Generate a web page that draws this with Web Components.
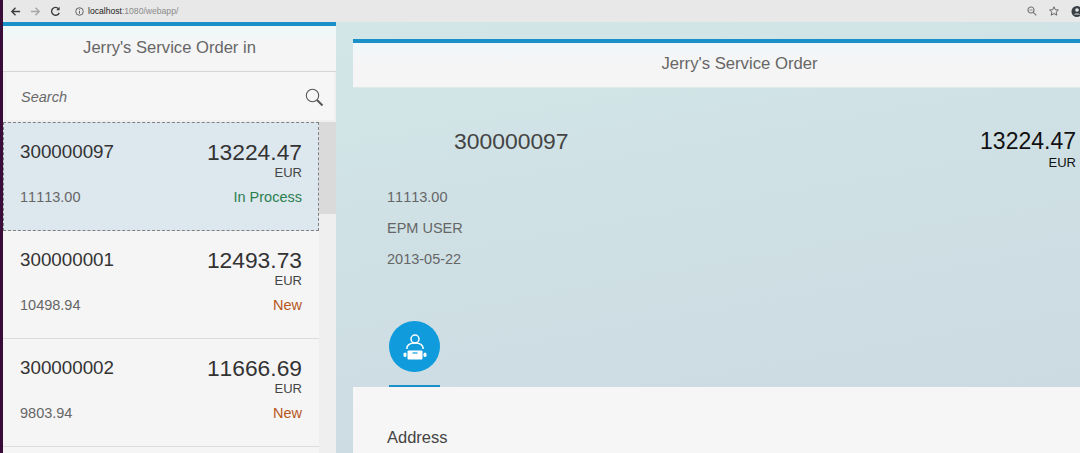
<!DOCTYPE html>
<html>
<head>
<meta charset="utf-8">
<title>Jerry's Service Order</title>
<style>
  html, body { margin: 0; height: 453px; overflow: hidden; background: #d2e2e6; font-family: "Liberation Sans", Arial, sans-serif; font-kerning: none; }
</style>
</head>
<body>
<order-app>
  <browser-bar slot="bar"></browser-bar>
  <master-panel slot="master" title-text="Jerry's Service Order in">
    <order-item selected number="300000097" amount="13224.47" net="11113.00" status="In Process" tone="good"></order-item>
    <order-item number="300000001" amount="12493.73" net="10498.94" status="New" tone="warn"></order-item>
    <order-item number="300000002" amount="11666.69" net="9803.94" status="New" tone="warn"></order-item>
    <order-item></order-item>
  </master-panel>
  <detail-panel slot="detail" title-text="Jerry's Service Order" number="300000097" amount="13224.47">
    <span slot="attr">11113.00</span>
    <span slot="attr">EPM USER</span>
    <span slot="attr">2013-05-22</span>
  </detail-panel>
</order-app>

<script>
  class OrderApp extends HTMLElement {
    constructor() {
      super();
      this.attachShadow({ mode: "open" }).innerHTML = `
        <style>
          :host { display: grid; grid-template-columns: 3px 333px 1fr; grid-template-rows: 22px 431px; width: 1080px; height: 453px; overflow: hidden; }
          .strip { grid-row: 1 / -1; grid-column: 1; background: #3a0c3a; }
          .bar { grid-row: 1; grid-column: 2 / -1; }
        </style>
        <div class="strip"></div>
        <div class="bar"><slot name="bar"></slot></div>
        <slot name="master"></slot>
        <slot name="detail"></slot>`;
    }
  }

  class BrowserBar extends HTMLElement {
    constructor() {
      super();
      this.attachShadow({ mode: "open" }).innerHTML = `
        <style>
          :host { display: flex; align-items: center; height: 22px; background: #e8e8e8; color: #555; font-size: 8.600px; box-sizing: border-box; padding: 0 0 0 7px; }
          svg { display: block; flex: none; }
          .nav { display: flex; gap: 9px; align-items: center; }
          .url { display: flex; align-items: center; gap: 4px; margin-left: 14px; }
          .url b { font-weight: normal; color: #222; }
          .url i { font-style: normal; color: #8a8a8a; }
          .right { margin-left: auto; display: flex; align-items: center; gap: 12px; margin-right: -1px; }
        </style>
        <div class="nav">
          <svg width="11" height="11" viewBox="0 0 12 12" fill="none" stroke="#3c3c3c" stroke-width="1.500"><path d="M11 6H2M6 2 2 6l4 4"/></svg>
          <svg width="11" height="11" viewBox="0 0 12 12" fill="none" stroke="#a5a5a5" stroke-width="1.500"><path d="M1 6h9M6 2l4 4-4 4"/></svg>
          <svg width="11" height="11" viewBox="0 0 12 12" fill="none" stroke="#3c3c3c" stroke-width="1.500"><path d="M10 7.500A4.300 4.300 0 1 1 9.300 3"/><path d="M10.500 .8v3.700H6.800" fill="#3c3c3c" stroke="none"/></svg>
        </div>
        <div class="url">
          <svg width="9" height="9" viewBox="0 0 10 10" fill="none" stroke="#555"><circle cx="5" cy="5" r="4.200"/><path d="M5 4.400V7.500M5 2.400v1"/></svg>
          <span><b>localhost</b><i>:1080/webapp/</i></span>
        </div>
        <div class="right">
          <svg width="10" height="10" viewBox="0 0 10 10" fill="none" stroke="#777" stroke-width="1.200"><circle cx="4" cy="4" r="3"/><path d="m6.300 6.300 3 3"/><path d="M2.600 4h2.800" stroke-width=".8"/></svg>
          <svg width="10" height="10" viewBox="0 0 10 10" fill="none" stroke="#666"><path d="m5 .8 1.300 2.900 3.100.3-2.300 2.100.7 3.100L5 7.600 2.200 9.200l.7-3.100L.6 4l3.100-.3z"/></svg>
          <svg width="10" height="11" viewBox="0 0 10 11"><circle cx="6" cy="5.500" r="5.500" fill="#3a3f45"/><circle cx="6" cy="4" r="1.800" fill="#e8e8e8"/><path d="M2.700 8.500c.6-1.500 6-1.500 6.600 0z" fill="#e8e8e8"/></svg>
        </div>`;
    }
  }

  class MasterPanel extends HTMLElement {
    constructor() {
      super();
      this.attachShadow({ mode: "open" }).innerHTML = `
        <style>
          :host { display: flex; flex-direction: column; height: 431px; background: #f0f0f0; overflow: hidden; }
          header { flex: none; box-sizing: border-box; height: 50px; padding-bottom: 2px; border-top: 4px solid #1a90c8; border-bottom: 1px solid #d6d6d6; background: linear-gradient(#eef8f9, #f5f5f6 40%); display: flex; align-items: center; justify-content: center; color: #666; font-size: 16.600px; }
          .search { flex: none; box-sizing: border-box; height: 48px; margin: 0 2px 0 3px; background: #f6f6f7; display: flex; align-items: center; justify-content: space-between; padding: 2px 10px 0 15px; color: #6a6a6a; font-size: 14.500px; font-style: italic; }
          .body { flex: 1; display: flex; min-height: 0; padding-top: 2px; }
          .list { flex: 0 0 316px; min-width: 0; }
          .track { flex: 1; background: #efefef; }
          .thumb { height: 92px; background: #dadada; }
        </style>
        <header></header>
        <div class="search">
          <span>Search</span>
          <svg width="19" height="19" viewBox="0 0 19 19" fill="none" stroke="#555"><circle cx="7.500" cy="7.500" r="6.200" stroke-width="1.100"/><path d="m12 12 5.500 5.500" stroke-width="2"/></svg>
        </div>
        <div class="body">
          <div class="list"><slot></slot></div>
          <div class="track"><div class="thumb"></div></div>
        </div>`;
    }
    connectedCallback() {
      this.shadowRoot.querySelector("header").textContent = this.getAttribute("title-text");
    }
  }

  class OrderItem extends HTMLElement {
    constructor() {
      super();
      this.attachShadow({ mode: "open" }).innerHTML = `
        <style>
          :host { display: block; box-sizing: border-box; height: 108px; padding: 15px 17px 0 17px; background: #f5f5f5; border-bottom: 1px solid #dcdcdc; color: #333; }
          :host([selected]) { height: 109px; padding-top: 16px; background: #dde7ee; outline: 1px dashed #808080; outline-offset: -1px; border-bottom: 0; }
          :host(:not([number])) .top, :host(:not([number])) .bottom { display: none; }
          .top, .bottom { display: flex; justify-content: space-between; }
          .num { font-size: 18.800px; line-height: 28px; }
          .amt { font-size: 22.800px; line-height: 28px; text-align: right; }
          .cur { font-size: 13px; line-height: 14px; text-align: right; color: #444; }
          .bottom { margin-top: 7px; font-size: 14.500px; line-height: 20px; color: #666; }
          .st.good { color: #2a7f4f; }
          .st.warn { color: #b8561c; }
        </style>
        <div class="top">
          <div class="num"></div>
          <div><div class="amt"></div><div class="cur">EUR</div></div>
        </div>
        <div class="bottom"><span class="net"></span><span class="st"></span></div>`;
    }
    connectedCallback() {
      if (!this.hasAttribute("number")) return;
      const s = this.shadowRoot;
      s.querySelector(".num").textContent = this.getAttribute("number");
      s.querySelector(".amt").textContent = this.getAttribute("amount");
      s.querySelector(".net").textContent = this.getAttribute("net");
      const st = s.querySelector(".st");
      st.textContent = this.getAttribute("status");
      st.classList.add(this.getAttribute("tone"));
    }
  }

  class DetailPanel extends HTMLElement {
    constructor() {
      super();
      this.attachShadow({ mode: "open" }).innerHTML = `
        <style>
          :host { display: flex; flex-direction: column; height: 431px; padding: 17px 0 0 17px; box-sizing: border-box; background: linear-gradient(170deg, #d2e6e7, #ccdae2 90%); overflow: hidden; }
          header { flex: none; box-sizing: border-box; height: 49px; padding: 0 0 2px 46px; border-top: 4px solid #1a90c8; border-bottom: 1px solid #dfe9ea; background: linear-gradient(#eef8f9, #f5f5f6 40%); display: flex; align-items: center; justify-content: center; color: #666; font-size: 16.700px; }
          .object { flex: none; box-sizing: border-box; height: 299px; padding: 39px 4px 0 34px; color: #666; }
          .head { display: flex; justify-content: space-between; }
          .num { margin: 0 0 0 67px; font-size: 22.900px; line-height: 28px; color: #444; }
          .amt { font-size: 23px; line-height: 29px; color: #111; text-align: right; }
          .cur { font-size: 13px; line-height: 14px; color: #111; text-align: right; }
          .attrs { display: flex; flex-direction: column; gap: 11px; margin-top: 17px; font-size: 14.500px; line-height: 20px; }
          .tab { margin: 52px 0 0 2px; width: 51px; }
          .circle { width: 51px; height: 51px; border-radius: 50%; background: #0f9bdc; display: flex; align-items: center; justify-content: center; }
          .line { height: 3px; margin-top: 13px; background: #1a90c8; }
          .content { flex: 1; background: #f6f6f6; padding: 38px 34px 0; font-size: 16.500px; line-height: 24px; color: #444; }
        </style>
        <header></header>
        <div class="object">
          <div class="head">
            <div class="num"></div>
            <div><div class="amt"></div><div class="cur">EUR</div></div>
          </div>
          <div class="attrs"><slot name="attr"></slot></div>
          <div class="tab">
            <div class="circle">
              <svg width="26" height="26" viewBox="0 0 26 26" fill="none" stroke="#fff" stroke-width="1.500">
                <circle cx="13" cy="5" r="4"/>
                <path d="M4.800 15c0-4 3-6 8.200-6s8.200 2 8.200 6"/>
                <rect x="5.500" y="16.500" width="15" height="9" rx="1" fill="#fff" stroke="none"/>
                <path d="M10.500 19h5" stroke="#0f9bdc" stroke-width="1.200"/>
                <rect x="1.500" y="18.500" width="3" height="4.500" rx="1.500" fill="#fff" stroke="none"/>
                <rect x="21.500" y="18.500" width="3" height="4.500" rx="1.500" fill="#fff" stroke="none"/>
              </svg>
            </div>
            <div class="line"></div>
          </div>
        </div>
        <div class="content">Address</div>`;
    }
    connectedCallback() {
      const s = this.shadowRoot;
      s.querySelector("header").textContent = this.getAttribute("title-text");
      s.querySelector(".num").textContent = this.getAttribute("number");
      s.querySelector(".amt").textContent = this.getAttribute("amount");
    }
  }

  customElements.define("order-app", OrderApp);
  customElements.define("browser-bar", BrowserBar);
  customElements.define("master-panel", MasterPanel);
  customElements.define("order-item", OrderItem);
  customElements.define("detail-panel", DetailPanel);
</script>
</body>
</html>
